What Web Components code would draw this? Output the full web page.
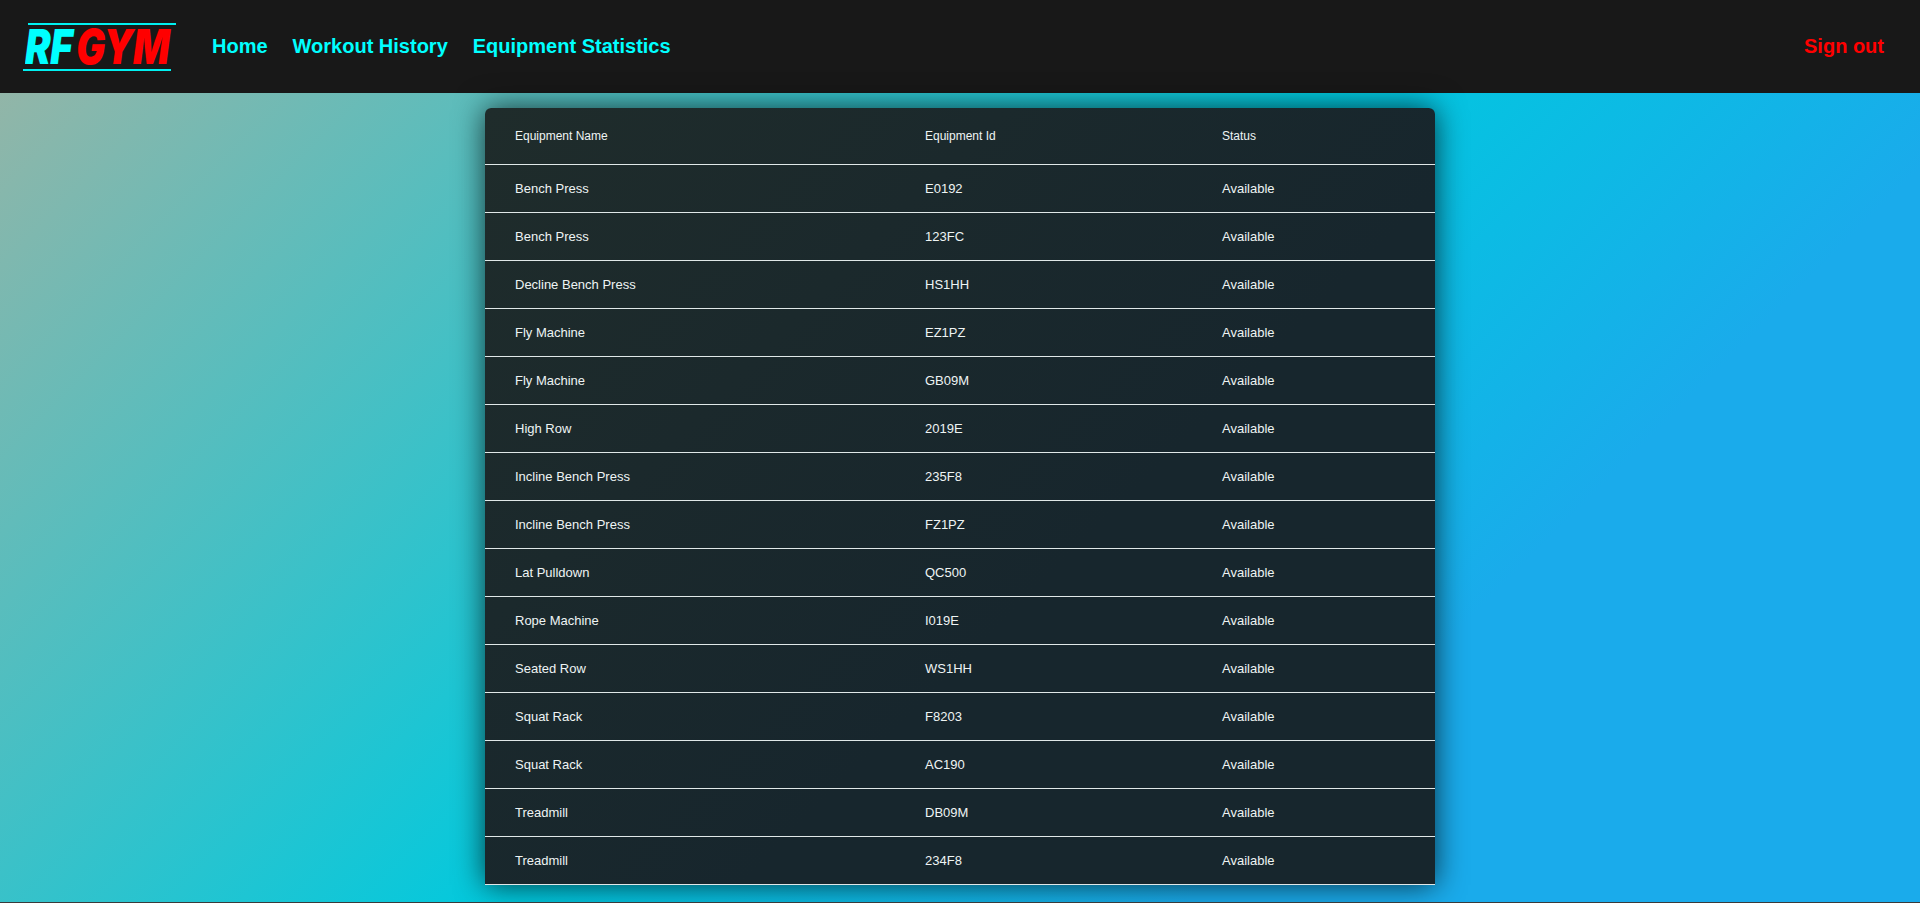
<!DOCTYPE html>
<html><head><meta charset="utf-8"><style>
html,body{margin:0;height:100%}
body{height:903px;overflow:hidden;box-sizing:border-box;border-bottom:1px solid #3a3a3a;font-family:"Liberation Sans",Arial,sans-serif;background:linear-gradient(135deg,#9cb4a4 0%,#00c9de 50%,#1aabeb 74%,#1aabeb 100%);display:flex;flex-direction:column}
</style></head><body>
<gym-nav></gym-nav>
<equipment-table></equipment-table>
<script>
class GymLogo extends HTMLElement{constructor(){super();this.attachShadow({mode:'open'}).innerHTML=`<style>
:host{display:block;width:152px;height:48px;position:relative;flex:none}
.t{position:absolute;left:5px;width:148px;top:0;height:2px;background:#00f0f0}
.b{position:absolute;left:0;width:148px;bottom:0;height:2px;background:#00f0f0}
.w{position:absolute;left:2px;top:-6px;font:italic 900 48px/60px Inter,sans-serif;white-space:nowrap;transform:scaleX(.8);transform-origin:0 0;letter-spacing:-.5px}
.c{color:#00ffff}.r{color:#ff0000;margin-left:5px}
</style><div class="t"></div><div class="w"><span class="c">RF</span><span class="r">GYM</span></div><div class="b"></div>`}}
customElements.define('gym-logo',GymLogo);
class GymNav extends HTMLElement{constructor(){super();this.attachShadow({mode:'open'}).innerHTML=`<style>
:host{display:block;flex:none}
nav{height:93px;background:#181818;display:flex;align-items:center;padding:0 36px 0 23px;box-sizing:border-box}
.links{display:flex;gap:25px;margin-left:37px;flex:1}
a{font-size:20px;font-weight:700;color:#00ffff;text-decoration:none}
a.out{color:#ff0000}
</style><nav><gym-logo></gym-logo><div class="links"><a>Home</a><a>Workout History</a><a>Equipment Statistics</a></div><a class="out">Sign out</a></nav>`}}
customElements.define('gym-nav',GymNav);
const rows=[["Bench Press","E0192"],["Bench Press","123FC"],["Decline Bench Press","HS1HH"],["Fly Machine","EZ1PZ"],["Fly Machine","GB09M"],["High Row","2019E"],["Incline Bench Press","235F8"],["Incline Bench Press","FZ1PZ"],["Lat Pulldown","QC500"],["Rope Machine","I019E"],["Seated Row","WS1HH"],["Squat Rack","F8203"],["Squat Rack","AC190"],["Treadmill","DB09M"],["Treadmill","234F8"]];
class TableRow extends HTMLElement{constructor(){super();this.attachShadow({mode:'open'}).innerHTML=`<style>
:host{display:grid;grid-template-columns:410px 297px 1fr;align-items:center;height:47px;border-bottom:1px solid #e0e8e8;padding-left:30px;box-sizing:content-box;font-size:13px;color:#eef4f4}
:host([head]){height:56px;font-size:12px}
</style><div><slot name="a"></slot></div><div><slot name="b"></slot></div><div><slot name="c"></slot></div>`}}
customElements.define('table-row',TableRow);
class EquipmentTable extends HTMLElement{constructor(){super();const s=this.attachShadow({mode:'open'});
const r=(a,b,c,h)=>`<table-row ${h?'head':''}><span slot="a">${a}</span><span slot="b">${b}</span><span slot="c">${c}</span></table-row>`;
s.innerHTML=`<style>
:host{display:block;flex:none;width:950px;margin:15px 0 0 485px}
.card{border-radius:6px 6px 0 0;background:linear-gradient(135deg,#1f2c2b,#17262d 60%);box-shadow:0 0 30px rgba(0,0,0,.72)}
</style><div class="card">${r('Equipment Name','Equipment Id','Status',1)}${rows.map(x=>r(x[0],x[1],'Available')).join('')}</div>`}}
customElements.define('equipment-table',EquipmentTable);
</script></body></html>
